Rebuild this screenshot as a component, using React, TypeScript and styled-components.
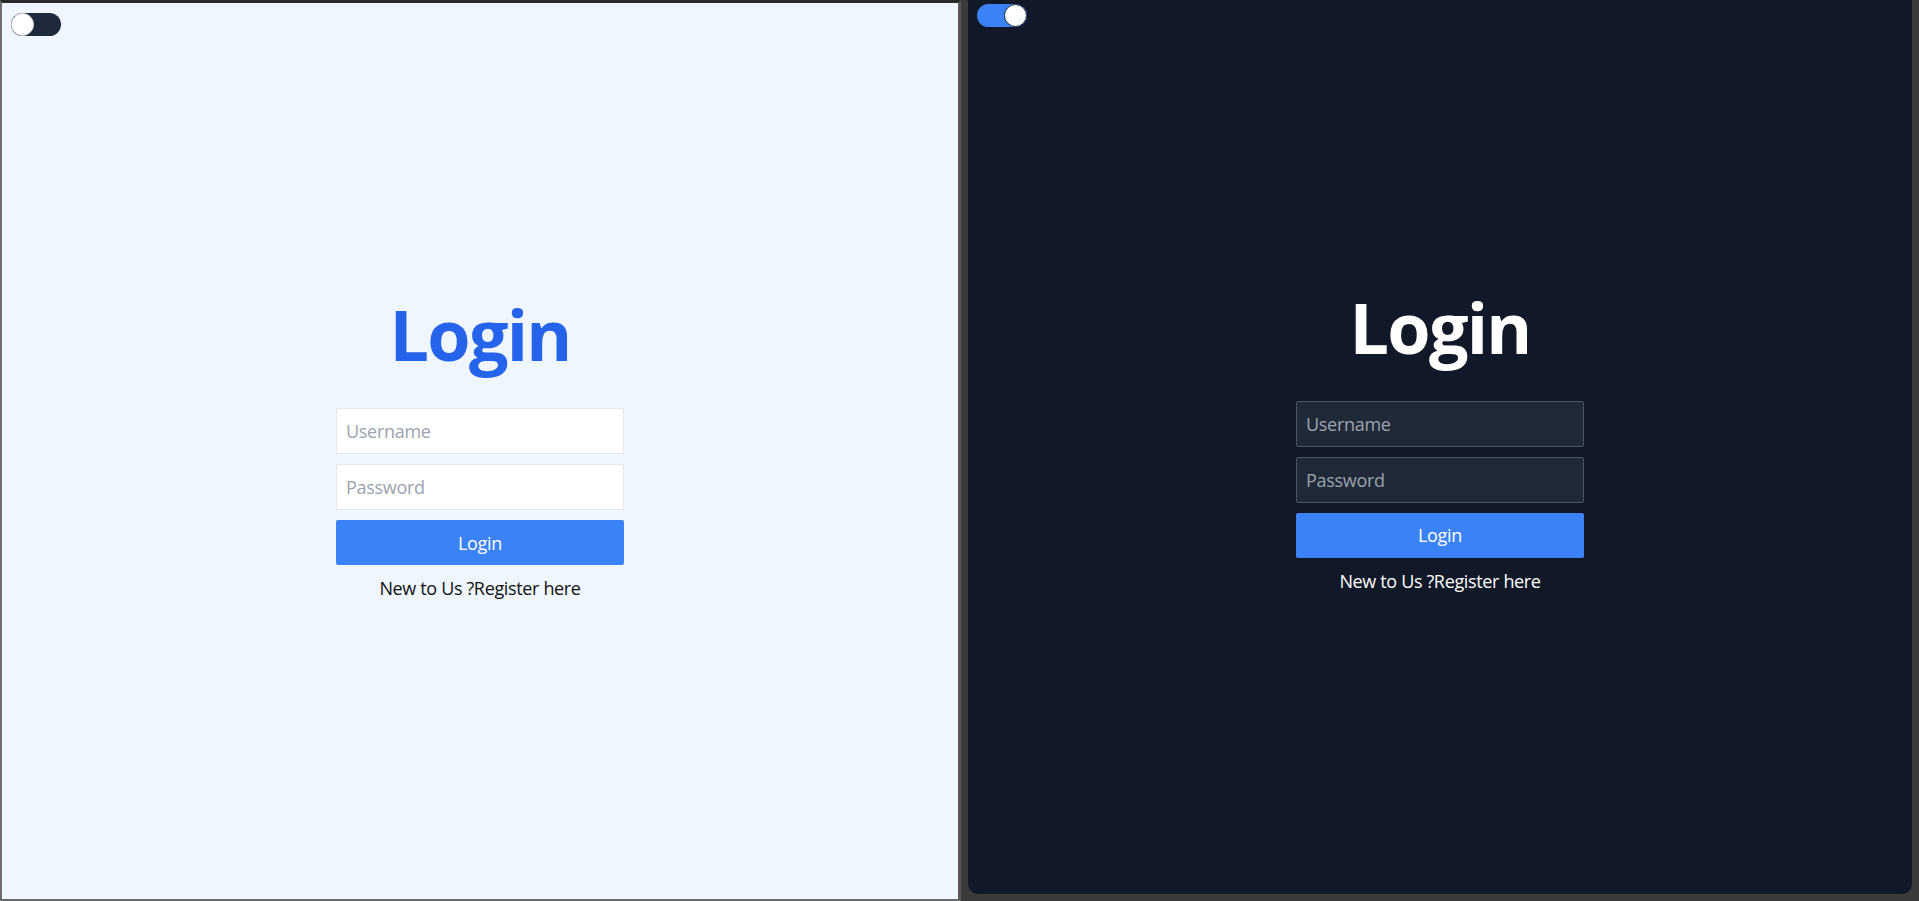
import React from "react";
import styled, { createGlobalStyle } from "styled-components";

const GlobalStyle = createGlobalStyle`
  html, body {
    margin: 0;
    padding: 0;
    background: #3b3b3b;
    font-family: "Open Sans", "Noto Sans", Arial, sans-serif;
  }
  * { box-sizing: border-box; }
`;

const Frame = styled.div`
  display: flex;
  height: 901px;
  width: 1919px;
  overflow: hidden;
  background: #3b3b3b;
`;

const LightPane = styled.div`
  width: 961px;
  flex: none;
  display: flex;
  flex-direction: column;
  background: #eff6ff;
  border-top: 3px solid #2a2a2a;
  border-left: 2px solid #707070;
  border-right: 3px solid #585858;
  border-bottom: 2px solid #6a6a6a;
`;

const DarkPane = styled.div`
  flex: 1;
  display: flex;
  flex-direction: column;
  background: #111827;
  margin: 0 7px 7px 7px;
  border-radius: 0 0 10px 10px;
`;

const ToggleBar = styled.div<{ $top: number; $left: number }>`
  display: flex;
  padding: ${(p) => p.$top}px 0 0 ${(p) => p.$left}px;
`;

const Track = styled.div<{ $on: boolean }>`
  width: 50px;
  height: 23px;
  border-radius: 12px;
  background: ${(p) => (p.$on ? "#3b82f6" : "#1e293b")};
  display: flex;
  justify-content: ${(p) => (p.$on ? "flex-end" : "flex-start")};
  align-items: center;
`;

const Knob = styled.div<{ $on: boolean }>`
  width: 23px;
  height: 23px;
  border-radius: 50%;
  background: #ffffff;
  border: 1px solid ${(p) => (p.$on ? "#1e293b" : "#d1d5db")};
`;

const Main = styled.div<{ $pb: number }>`
  flex: 1;
  display: flex;
  flex-direction: column;
  align-items: center;
  justify-content: center;
  padding-bottom: ${(p) => p.$pb}px;
`;

const Title = styled.h1<{ $dark: boolean }>`
  margin: 0 0 38px 0;
  font-size: 70px;
  line-height: 72px;
  letter-spacing: -1.8px;
  font-weight: 700;
  color: ${(p) => (p.$dark ? "#ffffff" : "#2563eb")};
`;

const Form = styled.form`
  width: 288px;
  display: flex;
  flex-direction: column;
  gap: 10px;
`;

const Input = styled.input<{ $dark: boolean }>`
  width: 100%;
  height: 46px;
  padding: 8px 9px;
  font-family: inherit;
  font-size: 18px;
  line-height: 28px;
  letter-spacing: -0.3px;
  border-radius: 2px;
  border: 1px solid ${(p) => (p.$dark ? "#4b5563" : "#e5e7eb")};
  background: ${(p) => (p.$dark ? "#1f2937" : "#ffffff")};
  color: ${(p) => (p.$dark ? "#ffffff" : "#111827")};
  outline: none;
  &::placeholder {
    color: #9ca3af;
  }
`;

const Button = styled.button`
  width: 100%;
  height: 45px;
  border: none;
  border-radius: 2px;
  background: #3b82f6;
  color: #ffffff;
  font-family: inherit;
  font-size: 18px;
  line-height: 28px;
  letter-spacing: -0.3px;
  cursor: pointer;
`;

const Note = styled.p<{ $dark: boolean }>`
  margin: 9px 0 0 0;
  font-size: 18px;
  line-height: 28px;
  letter-spacing: -0.35px;
  color: ${(p) => (p.$dark ? "#ffffff" : "#111111")};
`;

function LoginCard({ dark }: { dark: boolean }) {
  return (
    <>
      <Title $dark={dark}>Login</Title>
      <Form onSubmit={(e) => e.preventDefault()}>
        <Input $dark={dark} placeholder="Username" />
        <Input $dark={dark} type="password" placeholder="Password" />
        <Button type="submit">Login</Button>
      </Form>
      <Note $dark={dark}>New to Us ?Register here</Note>
    </>
  );
}

export default function App() {
  return (
    <>
      <GlobalStyle />
      <Frame>
        <LightPane>
          <ToggleBar $top={10} $left={9}>
            <Track $on={false}>
              <Knob $on={false} />
            </Track>
          </ToggleBar>
          <Main $pb={35}>
            <LoginCard dark={false} />
          </Main>
        </LightPane>
        <DarkPane>
          <ToggleBar $top={4} $left={9}>
            <Track $on={true}>
              <Knob $on={true} />
            </Track>
          </ToggleBar>
          <Main $pb={36}>
            <LoginCard dark={true} />
          </Main>
        </DarkPane>
      </Frame>
    </>
  );
}
